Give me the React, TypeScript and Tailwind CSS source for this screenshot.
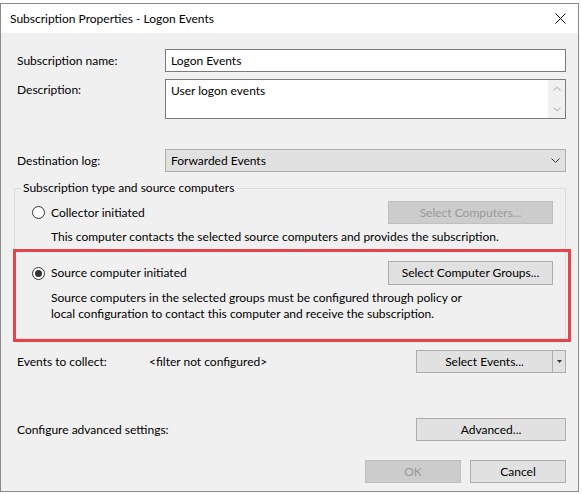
import React from "react"

function Btn({ children, className = "", disabled = false }: { children: React.ReactNode; className?: string; disabled?: boolean }) {
  return (
    <div
      className={`h-[23px] flex items-center justify-center border ${
        disabled ? "bg-[#cccccc] border-[#bfbfbf] text-[#9a9a9a]" : "bg-[#e1e1e1] border-[#adadad] text-black"
      } ${className}`}
    >
      {children}
    </div>
  )
}

function Radio({ checked = false }: { checked?: boolean }) {
  return (
    <div className="w-[13px] h-[13px] rounded-full border border-[#333333] bg-white flex items-center justify-center shrink-0">
      {checked && <div className="w-[7px] h-[7px] rounded-full bg-[#333333]" />}
    </div>
  )
}

export default function App() {
  return (
    <div className="relative w-[582px] h-[494px] bg-white overflow-hidden font-['Lato',sans-serif] text-[12px] leading-[16px] text-black">
      <div className="h-[3px] bg-white" />
      <div className="w-[579px] h-[489px] border border-[#8a8a8a] flex flex-col">
        {/* Title bar */}
        <div className="h-[29px] bg-white flex items-center justify-between pl-[9px] pr-[12px]">
          <span>Subscription Properties - Logon Events</span>
          <svg width="11" height="11" viewBox="0 0 11 11">
            <path d="M0.5 0.5 L10.5 10.5 M10.5 0.5 L0.5 10.5" stroke="#111" strokeWidth="1" />
          </svg>
        </div>

        {/* Body */}
        <div className="flex-1 bg-[#f0f0f0] pl-[16px] pt-[16px] flex flex-col">
          <div className="flex items-center h-[23px]">
            <div className="w-[148px]">Subscription name:</div>
            <div className="w-[401px] h-[23px] bg-white border border-[#7a7a7a] flex items-center pl-[5px]">Logon Events</div>
          </div>

          <div className="flex mt-[7px] h-[40px]">
            <div className="w-[148px] pt-[3px]">Description:</div>
            <div className="w-[401px] h-[40px] bg-white border border-[#7a7a7a] flex">
              <div className="flex-1 pl-[5px] pt-[3px]">User logon events</div>
              <div className="w-[17px] bg-[#f0f0f0] flex flex-col items-center justify-between py-[6px]">
                <svg width="8" height="5" viewBox="0 0 8 5">
                  <path d="M0.5 4.5 L4 1 L7.5 4.5" stroke="#c2c2c2" strokeWidth="1.2" fill="none" />
                </svg>
                <svg width="8" height="5" viewBox="0 0 8 5">
                  <path d="M0.5 0.5 L4 4 L7.5 0.5" stroke="#c2c2c2" strokeWidth="1.2" fill="none" />
                </svg>
              </div>
            </div>
          </div>

          <div className="flex items-center mt-[30px] h-[23px]">
            <div className="w-[148px]">Destination log:</div>
            <div className="w-[401px] h-[23px] bg-[#e1e1e1] border border-[#adadad] flex items-center justify-between pl-[5px] pr-[5px]">
              <span>Forwarded Events</span>
              <svg width="9" height="5" viewBox="0 0 9 5">
                <path d="M0.5 0.5 L4.5 4.5 L8.5 0.5" stroke="#333" strokeWidth="1" fill="none" />
              </svg>
            </div>
          </div>

          {/* Group box */}
          <fieldset className="ml-[-3px] mt-[8px] w-[552px] border border-[#dcdcdc] pb-[16px]">
            <legend className="ml-[6px] px-[2px]">Subscription type and source computers</legend>
            <div className="pl-[17px] pr-[12px]">
              <div className="flex items-center justify-between mt-[5px] h-[23px]">
                <div className="flex items-center gap-[6px]">
                  <Radio />
                  <span>Collector initiated</span>
                </div>
                <Btn disabled className="w-[165px]">Select Computers...</Btn>
              </div>
              <div className="pl-[19px] mt-[5px]">This computer contacts the selected source computers and provides the subscription.</div>

              <div className="flex items-center justify-between mt-[16px] h-[24px]">
                <div className="flex items-center gap-[6px]">
                  <Radio checked />
                  <span>Source computer initiated</span>
                </div>
                <Btn className="w-[165px] h-[24px]">Select Computer Groups...</Btn>
              </div>
              <div className="pl-[19px] mt-[5px]">
                Source computers in the selected groups must be configured through policy or
                <br />
                local configuration to contact this computer and receive the subscription.
              </div>
            </div>
          </fieldset>

          <div className="flex items-center mt-[11px] h-[23px] w-[549px]">
            <div className="w-[132px]">Events to collect:</div>
            <div className="flex-1">&lt;filter not configured&gt;</div>
            <div className="w-[150px] h-[23px] bg-[#e1e1e1] border border-[#adadad] flex">
              <div className="flex-1 flex items-center justify-center">Select Events...</div>
              <div className="w-[13px] border-l border-[#adadad] flex items-center justify-center">
                <svg width="5" height="3" viewBox="0 0 5 3">
                  <path d="M0 0 L5 0 L2.5 3 Z" fill="#333" />
                </svg>
              </div>
            </div>
          </div>

          <div className="flex items-center justify-between mt-[45px] h-[23px] w-[549px]">
            <div>Configure advanced settings:</div>
            <Btn className="w-[150px]">Advanced...</Btn>
          </div>

          <div className="flex justify-end gap-[9px] mt-[19px] w-[549px]">
            <Btn disabled className="w-[96px]">OK</Btn>
            <Btn className="w-[96px]">Cancel</Btn>
          </div>
        </div>
      </div>

      {/* annotation highlight */}
      <div className="absolute left-[13px] top-[249px] w-[558px] h-[93px] border-[3px] border-[#e5444c] pointer-events-none" />
    </div>
  )
}
